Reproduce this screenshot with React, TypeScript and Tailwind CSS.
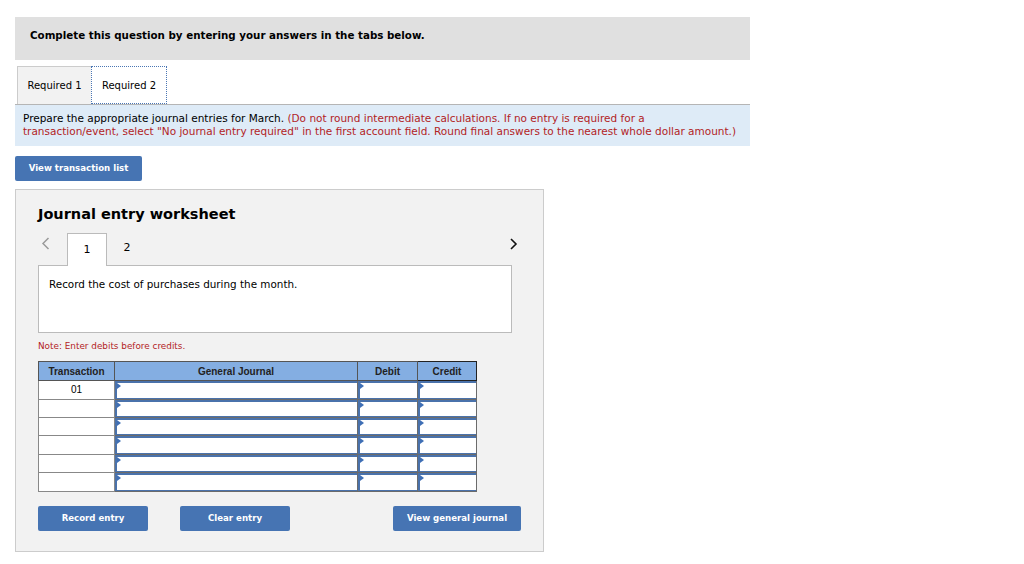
import React from 'react';

const rows = ['01', '', '', '', '', ''];

function Marker() {
  return <span className="absolute left-0 top-0 w-0 h-0 border-t-[3px] border-b-[3px] border-l-[4px] border-t-transparent border-b-transparent border-l-[#3f6fb5]" />;
}

function InputCell({ w }: { w: string }) {
  return (
    <td className={`${w} p-0 border border-[#6b6b6b] h-[18.4px]`}>
      <div className="relative h-[17.4px] bg-white border-t-2 border-l-2 border-b border-[#4a72ab]">
        <Marker />
      </div>
    </td>
  );
}

export default function App() {
  return (
    <div className="min-h-[564px] bg-white pl-[15px] pt-[17px] text-black" style={{ fontFamily: 'Verdana, "DejaVu Sans", sans-serif' }}>
      {/* Header */}
      <div className="w-[735px] h-[43px] bg-[#e0e0e0] pl-[15px] pt-[10px] leading-[14px]">
        <span className="text-[10.3px] font-bold">Complete this question by entering your answers in the tabs below.</span>
      </div>

      {/* Tabs */}
      <div className="flex mt-[6px] h-[38px] pl-[2px] w-[735px]">
        <div className="w-[74px] h-full bg-[#f2f2f2] border-l border-t border-[#cccccc] flex items-center justify-center text-[10px]">Required 1</div>
        <div className="w-[76px] h-full bg-white border border-dotted border-[#4a76b4] flex items-center justify-center text-[10px]">Required 2</div>
      </div>

      {/* Instructions */}
      <div className="w-[735px] h-[42px] bg-[#deebf7] border-t border-[#b5b5b5] pl-[8px] pt-[7px] text-[10.5px] leading-[13px]">
        <span>Prepare the appropriate journal entries for March. </span>
        <span className="text-[#b2231f]">(Do not round intermediate calculations. If no entry is required for a<br />transaction/event, select "No journal entry required" in the first account field. Round final answers to the nearest whole dollar amount.)</span>
      </div>

      <button className="mt-[10px] w-[127px] h-[25px] bg-[#4674b3] rounded-[2px] text-white text-[8.6px] font-bold">View transaction list</button>

      {/* Worksheet */}
      <div className="mt-[8px] w-[529px] h-[363px] bg-[#f2f2f2] border border-[#cccccc] pl-[22px] pt-[15px]">
        <div className="text-[14.5px] font-bold leading-[18px]">Journal entry worksheet</div>

        <div className="flex items-end mt-[9px] h-[33px] w-[474px] relative">
          <svg className="ml-[3px] mb-[15px] w-[26px]" width="26" height="13" viewBox="0 0 26 13">
            <path d="M7.5 1 L2 6.5 L7.5 12" fill="none" stroke="#9a9a9a" strokeWidth="1.5" />
          </svg>
          <div className="w-[40px] h-[33px] bg-white border border-b-0 border-[#bbbbbb] flex items-center justify-center text-[11px] relative top-[1px] z-10">1</div>
          <div className="w-[40px] h-[33px] flex items-center justify-center text-[11px]">2</div>
          <svg className="ml-auto mr-[-6px] mb-[15px]" width="9" height="12" viewBox="0 0 9 12">
            <path d="M2 1 L7 6 L2 11" fill="none" stroke="#111" strokeWidth="1.6" />
          </svg>
        </div>

        <div className="w-[474px] h-[68px] bg-white border border-[#bbbbbb] pl-[10px] pt-[11px] text-[10.4px]">
          Record the cost of purchases during the month.
        </div>

        <div className="mt-[7px] text-[8.85px] text-[#b2231f]">Note: Enter debits before credits.</div>

        <table className="mt-[8px] border-collapse border border-[#888888] text-[10px]" style={{ fontFamily: '"Liberation Sans", Arial, sans-serif' }}>
          <thead>
            <tr className="h-[19px] bg-[#84aee2] font-bold text-[#222]">
              <th className="w-[76px] border border-[#555] font-bold">Transaction</th>
              <th className="w-[243px] border border-[#555] font-bold">General Journal</th>
              <th className="w-[60px] border border-[#555] font-bold">Debit</th>
              <th className="w-[59px] border border-[#222] font-bold">Credit</th>
            </tr>
          </thead>
          <tbody>
            {rows.map((r, i) => (
              <tr key={i}>
                <td className="w-[76px] h-[18.4px] p-0 bg-white border border-[#888] text-center">{r}</td>
                <InputCell w="w-[243px]" />
                <InputCell w="w-[60px]" />
                <InputCell w="w-[59px]" />
              </tr>
            ))}
          </tbody>
        </table>

        <div className="flex mt-[14px] w-[483px]">
          <button className="w-[110px] h-[25px] bg-[#4674b3] rounded-[2px] text-white text-[8.6px] font-bold">Record entry</button>
          <button className="ml-[32px] w-[110px] h-[25px] bg-[#4674b3] rounded-[2px] text-white text-[8.6px] font-bold">Clear entry</button>
          <button className="ml-auto w-[128px] h-[25px] bg-[#4674b3] rounded-[2px] text-white text-[8.6px] font-bold">View general journal</button>
        </div>
      </div>
    </div>
  );
}
